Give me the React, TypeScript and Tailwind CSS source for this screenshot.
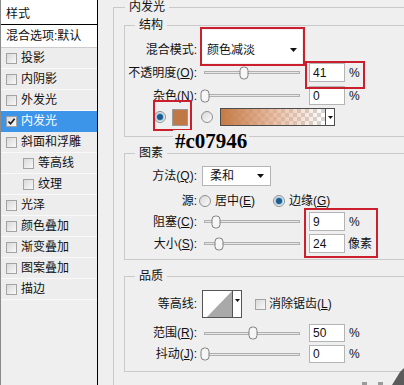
import React from 'react';

const Check = ({ checked = false }: { checked?: boolean }) => (
  <span className="flex h-[11px] w-[11px] shrink-0 items-center justify-center border border-[#a3a3a3] bg-linear-to-br from-[#d9d9d9] to-[#f9f9f9]">
    {checked && (
      <svg width="9" height="9" viewBox="0 0 9 9">
        <path d="M1.5 4.5 L3.6 6.8 L7.6 1.8" fill="none" stroke="#1c1c1c" strokeWidth="1.7" />
      </svg>
    )}
  </span>
);

const Radio = ({ on = false }: { on?: boolean }) => (
  <span className="flex h-[12px] w-[12px] shrink-0 items-center justify-center rounded-full border border-[#8e8f8f] bg-linear-to-br from-[#d8d8d8] to-[#fbfbfb]">
    {on && <span className="h-[6px] w-[6px] rounded-full bg-[#1e5b88] shadow-[0_0_0_1px_#93c8ec]" />}
  </span>
);

const Arrow = () => (
  <svg width="7" height="4" viewBox="0 0 7 4" className="shrink-0">
    <polygon points="0,0 7,0 3.5,4" fill="#111" />
  </svg>
);

const Slider = ({ pct }: { pct: number }) => (
  <div className="relative ml-[4px] flex h-full w-[102px] shrink-0 items-center px-[3px]">
    <div className="h-[3px] w-full border border-[#b0b0b0] bg-[#e6e6e6]" />
    <span
      className="absolute top-1/2 h-[13px] w-[9px] -translate-x-1/2 -translate-y-1/2 rounded-[4px] border border-[#808080] bg-[#f6f6f6]"
      style={{ left: 4 + pct * 0.96 }}
    />
  </div>
);

const Field = ({ v }: { v: string }) => (
  <div className="ml-[6px] flex h-full w-[36px] shrink-0 items-center border border-[#b4b4b4] bg-white pl-[3px]">{v}</div>
);

const Row = ({ label, className, children }: { label: React.ReactNode; className: string; children?: React.ReactNode }) => (
  <div className={`flex items-center ${className}`}>
    <div className="w-[72px] shrink-0 text-right">{label}</div>
    {children}
  </div>
);

const styles = [
  { name: '投影' },
  { name: '内阴影' },
  { name: '外发光' },
  { name: '内发光', on: true },
  { name: '斜面和浮雕' },
  { name: '等高线', sub: true },
  { name: '纹理', sub: true },
  { name: '光泽' },
  { name: '颜色叠加' },
  { name: '渐变叠加' },
  { name: '图案叠加' },
  { name: '描边' },
];

const App: React.FC = () => {
  return (
    <div className="relative flex h-[385px] w-[404px] overflow-hidden bg-[#efefef] font-['Liberation_Sans','Noto_Sans_CJK_SC',sans-serif] text-[12px] leading-[14px] text-[#111]">
      {/* style list */}
      <div className="flex w-[98px] shrink-0 flex-col border-l border-r border-l-[#8a8a8a] border-r-black">
        <div className="h-[25px] border-b border-black bg-white pl-[5px] pt-[7px]">样式</div>
        <div className="flex h-[23px] items-center border-b border-[#cdcdcd] bg-white pl-[5px]">混合选项:默认</div>
        {styles.map((s) => (
          <div
            key={s.name}
            className={`flex h-[21px] items-center gap-[4px] border-b ${s.on ? 'border-[#3d95ea] bg-[#3d95ea] text-white' : 'border-[#f9f9f9] bg-[#ededed]'} ${s.sub ? 'pl-[22px]' : 'pl-[5px]'}`}
          >
            <Check checked={s.on} />
            <span>{s.name}</span>
          </div>
        ))}
      </div>

      {/* settings */}
      <div className="min-w-0 flex-1 pl-[15px]">
        <fieldset className="h-[420px] w-[300px] border border-[#c9c9c9]">
          <legend className="ml-[11px] px-[4px] leading-[14px]">内发光</legend>

          <fieldset className="ml-[10px] mt-[4px] w-[290px] border border-[#c9c9c9] pb-[10px]">
            <legend className="ml-[10px] px-[4px] leading-[14px]">结构</legend>
            <Row label={<span className="pt-[7px] block">混合模式:</span>} className="-mt-[2px] h-[33px]">
              <div className="ml-[4px] flex h-full w-[101px] shrink-0 items-center justify-between bg-white pl-[6px] pr-[5px] pt-[7px]">
                <span>颜色减淡</span>
                <Arrow />
              </div>
            </Row>
            <Row label={<>不透明度(<u>O</u>):</>} className="h-[19px]">
              <Slider pct={41} />
              <Field v="41" />
              <span className="ml-[4px]">%</span>
            </Row>
            <Row label={<>杂色(<u>N</u>):</>} className="mt-[4px] h-[19px]">
              <Slider pct={0} />
              <Field v="0" />
              <span className="ml-[4px]">%</span>
            </Row>
            <div className="mt-[3px] flex h-[18px] items-center pl-[29px]">
              <Radio on />
              <span className="ml-[6px] h-[17px] w-[16px] shrink-0 border border-[#9a9a9a] bg-[#c07946]" />
              <span className="ml-[13px]">
                <Radio />
              </span>
              <div className="ml-[7px] flex h-[18px] w-[115px] shrink-0 border border-[#4d4d4d] bg-[conic-gradient(#d6d6d6_25%,#ffffff_0_50%,#d6d6d6_0_75%,#ffffff_0)] bg-[length:8px_8px]">
                <div className="h-full flex-1 bg-linear-to-r from-[#c47a46] via-[#e0a07a]/70 to-transparent" />
                <div className="flex w-[9px] items-center justify-center border-l border-[#4d4d4d] bg-white">
                  <svg width="5" height="3" viewBox="0 0 5 3">
                    <polygon points="0,0 5,0 2.5,3" fill="#111" />
                  </svg>
                </div>
              </div>
            </div>
          </fieldset>

          <fieldset className="ml-[10px] mt-[9px] w-[290px] border border-[#c9c9c9] pb-[6px]">
            <legend className="ml-[10px] px-[4px] leading-[14px]">图素</legend>
            <Row label={<>方法(<u>Q</u>):</>} className="mt-[6px] h-[20px]">
              <div className="ml-[5px] flex h-full w-[69px] shrink-0 items-center justify-between border border-[#b4b4b4] bg-white pl-[7px] pr-[6px]">
                <span>柔和</span>
                <Arrow />
              </div>
            </Row>
            <Row label="源:" className="mt-[6px] h-[18px]">
              <span className="ml-[2px]">
                <Radio />
              </span>
              <span className="ml-[4px] w-[58px] shrink-0">
                居中(<u>E</u>)
              </span>
              <Radio on />
              <span className="ml-[4px]">
                边缘(<u>G</u>)
              </span>
            </Row>
            <Row label={<>阻塞(<u>C</u>):</>} className="mt-[2px] h-[19px]">
              <Slider pct={11} />
              <Field v="9" />
              <span className="ml-[4px]">%</span>
            </Row>
            <Row label={<>大小(<u>S</u>):</>} className="mt-[3px] h-[19px]">
              <Slider pct={15} />
              <Field v="24" />
              <span className="ml-[3px]">像素</span>
            </Row>
          </fieldset>

          <fieldset className="ml-[10px] mt-[9px] w-[290px] border border-[#c9c9c9] pb-[8px]">
            <legend className="ml-[10px] px-[4px] leading-[14px]">品质</legend>
            <Row label="等高线:" className="mt-[7px] h-[28px]">
              <div className="ml-[5px] flex h-full w-[40px] shrink-0 border border-[#555555] bg-white">
                <svg width="29" height="26" viewBox="0 0 29 26" className="shrink-0">
                  <polygon points="4,26 29,0 29,26" fill="#a9a9a9" />
                </svg>
                <div className="flex flex-1 items-start justify-center border-l border-[#555555] pt-[8px]">
                  <svg width="5" height="3" viewBox="0 0 5 3">
                    <polygon points="0,0 5,0 2.5,3" fill="#111" />
                  </svg>
                </div>
              </div>
              <span className="ml-[13px]">
                <Check />
              </span>
              <span className="ml-[3px]">
                消除锯齿(<u>L</u>)
              </span>
            </Row>
            <Row label={<>范围(<u>R</u>):</>} className="mt-[6px] h-[18px]">
              <Slider pct={50} />
              <Field v="50" />
              <span className="ml-[4px]">%</span>
            </Row>
            <Row label={<>抖动(<u>J</u>):</>} className="mt-[3px] h-[18px]">
              <Slider pct={0} />
              <Field v="0" />
              <span className="ml-[4px]">%</span>
            </Row>
          </fieldset>
        </fieldset>
      </div>

      {/* annotation marks */}
      <div className="absolute left-[200px] top-[27px] h-[39px] w-[105px] border-2 border-[#cc1f2e]" />
      <div className="absolute left-[305px] top-[61px] h-[28px] w-[60px] border-2 border-[#cc1f2e]" />
      <div className="absolute left-[153px] top-[100px] h-[31px] w-[39px] border-2 border-[#cc1f2e]" />
      <div className="absolute left-[304px] top-[208px] h-[50px] w-[74px] border-2 border-[#cc1f2e]" />
      <div className="absolute left-[173px] top-[130px] bg-[#efefef] px-[2px] font-['Liberation_Serif',serif] text-[21px] font-bold leading-[22px] text-black">
        #c07946
      </div>
      <svg className="absolute left-[356px] top-[366px]" width="48" height="19" viewBox="0 0 48 19">
        <rect x="6" y="16" width="5" height="3" fill="#9a9a9a" />
        <rect x="22" y="16" width="5" height="3" fill="#9a9a9a" />
        <polygon points="36,19 44,6 48,2 48,19" fill="#5b5b5b" />
      </svg>
    </div>
  );
};

export default App;
